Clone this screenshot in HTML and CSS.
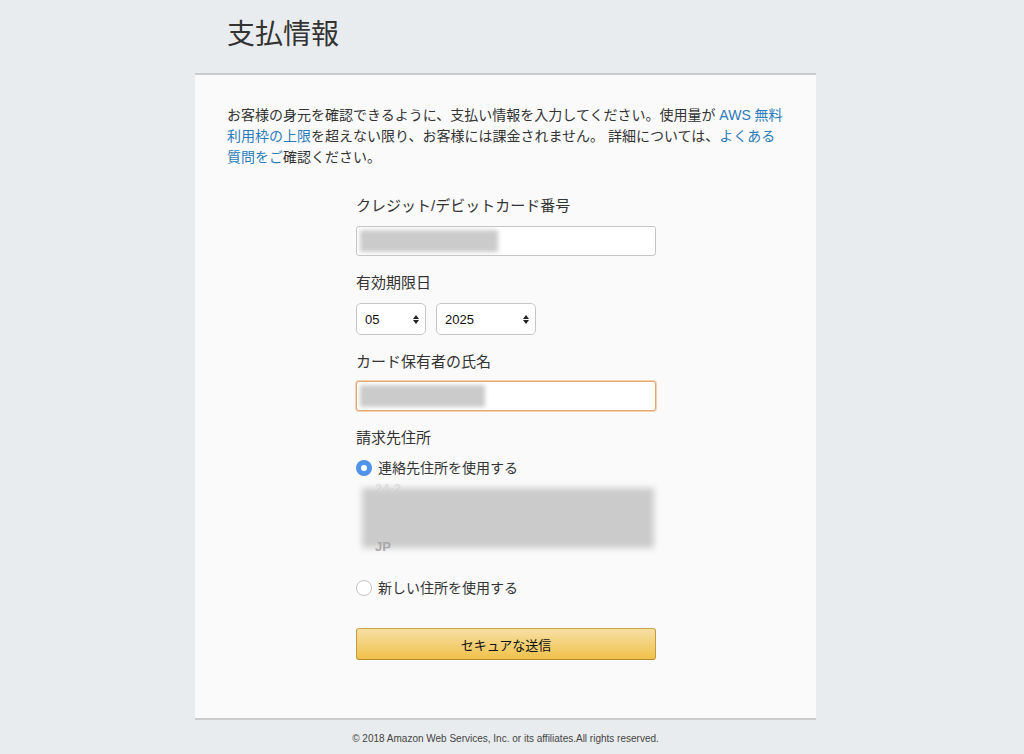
FILE: index.html
```html
<!DOCTYPE html>
<html lang="ja">
<head>
<meta charset="utf-8">
<title>支払情報</title>
<link rel="stylesheet" href="styles.css">
</head>
<body>
<div class="page">
  <h1 class="title">支払情報</h1>
  <div class="card">
    <p class="intro">お客様の身元を確認できるように、支払い情報を入力してください。使用量が <a href="#">AWS 無料利用枠の上限</a>を超えない限り、お客様には課金されません。 詳細については、<a href="#">よくある質問をご</a>確認ください。</p>
    <form class="form">
      <label class="label">クレジット/デビットカード番号</label>
      <div class="input"><span class="blur blur-card"></span></div>

      <label class="label">有効期限日</label>
      <div class="selects">
        <div class="select sel-month"><span>05</span><span class="arrows"><i class="up"></i><i class="down"></i></span></div>
        <div class="select sel-year"><span>2025</span><span class="arrows"><i class="up"></i><i class="down"></i></span></div>
      </div>

      <label class="label">カード保有者の氏名</label>
      <div class="input focused"><span class="blur blur-name"></span></div>

      <label class="label">請求先住所</label>
      <div class="radio-row"><span class="radio checked"></span><span>連絡先住所を使用する</span></div>
      <div class="address">
        <span class="addr-line faint">24-2</span>
        <span class="addr-block"></span>
        <span class="addr-line jp">JP</span>
      </div>
      <div class="radio-row second"><span class="radio"></span><span>新しい住所を使用する</span></div>

      <button type="button" class="submit">セキュアな送信</button>
    </form>
  </div>
  <p class="footer">© 2018 Amazon Web Services, Inc. or its affiliates.All rights reserved.</p>
</div>
</body>
</html>
```

FILE: styles.css
```css
html, body {
  margin: 0;
  padding: 0;
  background: #e9ecee;
}
body {
  font-family: "Liberation Sans", "Noto Sans CJK JP", sans-serif;
  color: #333;
  padding-right: 13px;
}
.page {
  width: 621px;
  margin: 0 auto;
}
.title {
  margin: 0;
  padding: 15px 0 0 32px;
  height: 62px;
  box-sizing: border-box;
  font-size: 28px;
  line-height: 40px;
  font-weight: normal;
  color: #333;
}
.card {
  margin-top: 11px;
  background: #fafafa;
  border-top: 2px solid #c9cbcd;
  border-bottom: 2px solid #c9cbcd;
  padding: 30px 31px 58px 32px;
}
.intro {
  margin: 0;
  font-size: 14px;
  line-height: 21px;
  color: #333;
}
.intro a {
  color: #2b7bb9;
  text-decoration: none;
}
.form {
  width: 300px;
  margin: 28px auto 0;
  display: flex;
  flex-direction: column;
}
.label {
  font-size: 15px;
  line-height: 20px;
  color: #333;
  margin-bottom: 10px;
}
.input {
  height: 30px;
  box-sizing: border-box;
  border: 1px solid #c6c6c6;
  border-radius: 3px;
  background: #fff;
  margin-bottom: 17px;
  padding: 3px;
  display: flex;
  align-items: center;
}
.input.focused {
  border-color: #e4a970;
  box-shadow: 0 0 0 1px #f2d2b3;
  margin-top: -1px;
}
.blur {
  display: block;
  height: 22px;
  background: #cbcbcb;
  filter: blur(2px);
}
.blur-card { width: 138px; }
.blur-name { width: 125px; }
.selects {
  display: flex;
  gap: 10px;
  margin-bottom: 17px;
}
.select {
  height: 32px;
  box-sizing: border-box;
  border: 1px solid #c6c6c6;
  border-radius: 5px;
  background: #fff;
  display: flex;
  align-items: center;
  justify-content: space-between;
  padding: 0 6px 0 8px;
  font-size: 13px;
  color: #111;
}
.sel-month { width: 70px; }
.sel-year { width: 100px; }
.arrows {
  display: flex;
  flex-direction: column;
  gap: 1px;
}
.arrows i {
  display: block;
  width: 0;
  height: 0;
  border-left: 3px solid transparent;
  border-right: 3px solid transparent;
}
.arrows .up { border-bottom: 4px solid #222; }
.arrows .down { border-top: 4px solid #222; }
.radio-row {
  display: flex;
  align-items: center;
  gap: 6px;
  font-size: 14px;
  line-height: 20px;
  color: #333;
}
.radio {
  width: 16px;
  height: 16px;
  box-sizing: border-box;
  border-radius: 50%;
  border: 1px solid #c3c3c3;
  background: #fff;
  position: relative;
}
.radio.checked {
  border: none;
  background: #4f94e9;
}
.radio.checked::after {
  content: "";
  position: absolute;
  left: 5px;
  top: 5px;
  width: 6px;
  height: 6px;
  border-radius: 50%;
  background: #fff;
}
.address {
  position: relative;
  height: 68px;
  margin: 7px 0 25px 4px;
}
.addr-block {
  position: absolute;
  left: 2px;
  top: 3px;
  right: 2px;
  height: 60px;
  background: #cbcbcb;
  filter: blur(3px);
}
.addr-line {
  position: absolute;
  left: 15px;
  font-size: 13px;
  font-weight: bold;
  color: #aaa;
}
.addr-line.faint { top: -4px; color: #e2e2e2; }
.addr-line.jp { top: 54px; color: #a9a9a9; }
.radio-row.second {
  margin-bottom: 30px;
}
.submit {
  height: 32px;
  border: 1px solid;
  border-color: #c8a949 #c09d3a #b08c2e;
  border-radius: 3px;
  background: linear-gradient(to bottom, #f7dfa5, #f0c14b);
  font-family: inherit;
  font-size: 13px;
  color: #111;
  cursor: pointer;
}
.footer {
  margin: 0;
  padding: 12px 0;
  text-align: center;
  font-size: 10px;
  line-height: 14px;
  color: #444;
}
```
